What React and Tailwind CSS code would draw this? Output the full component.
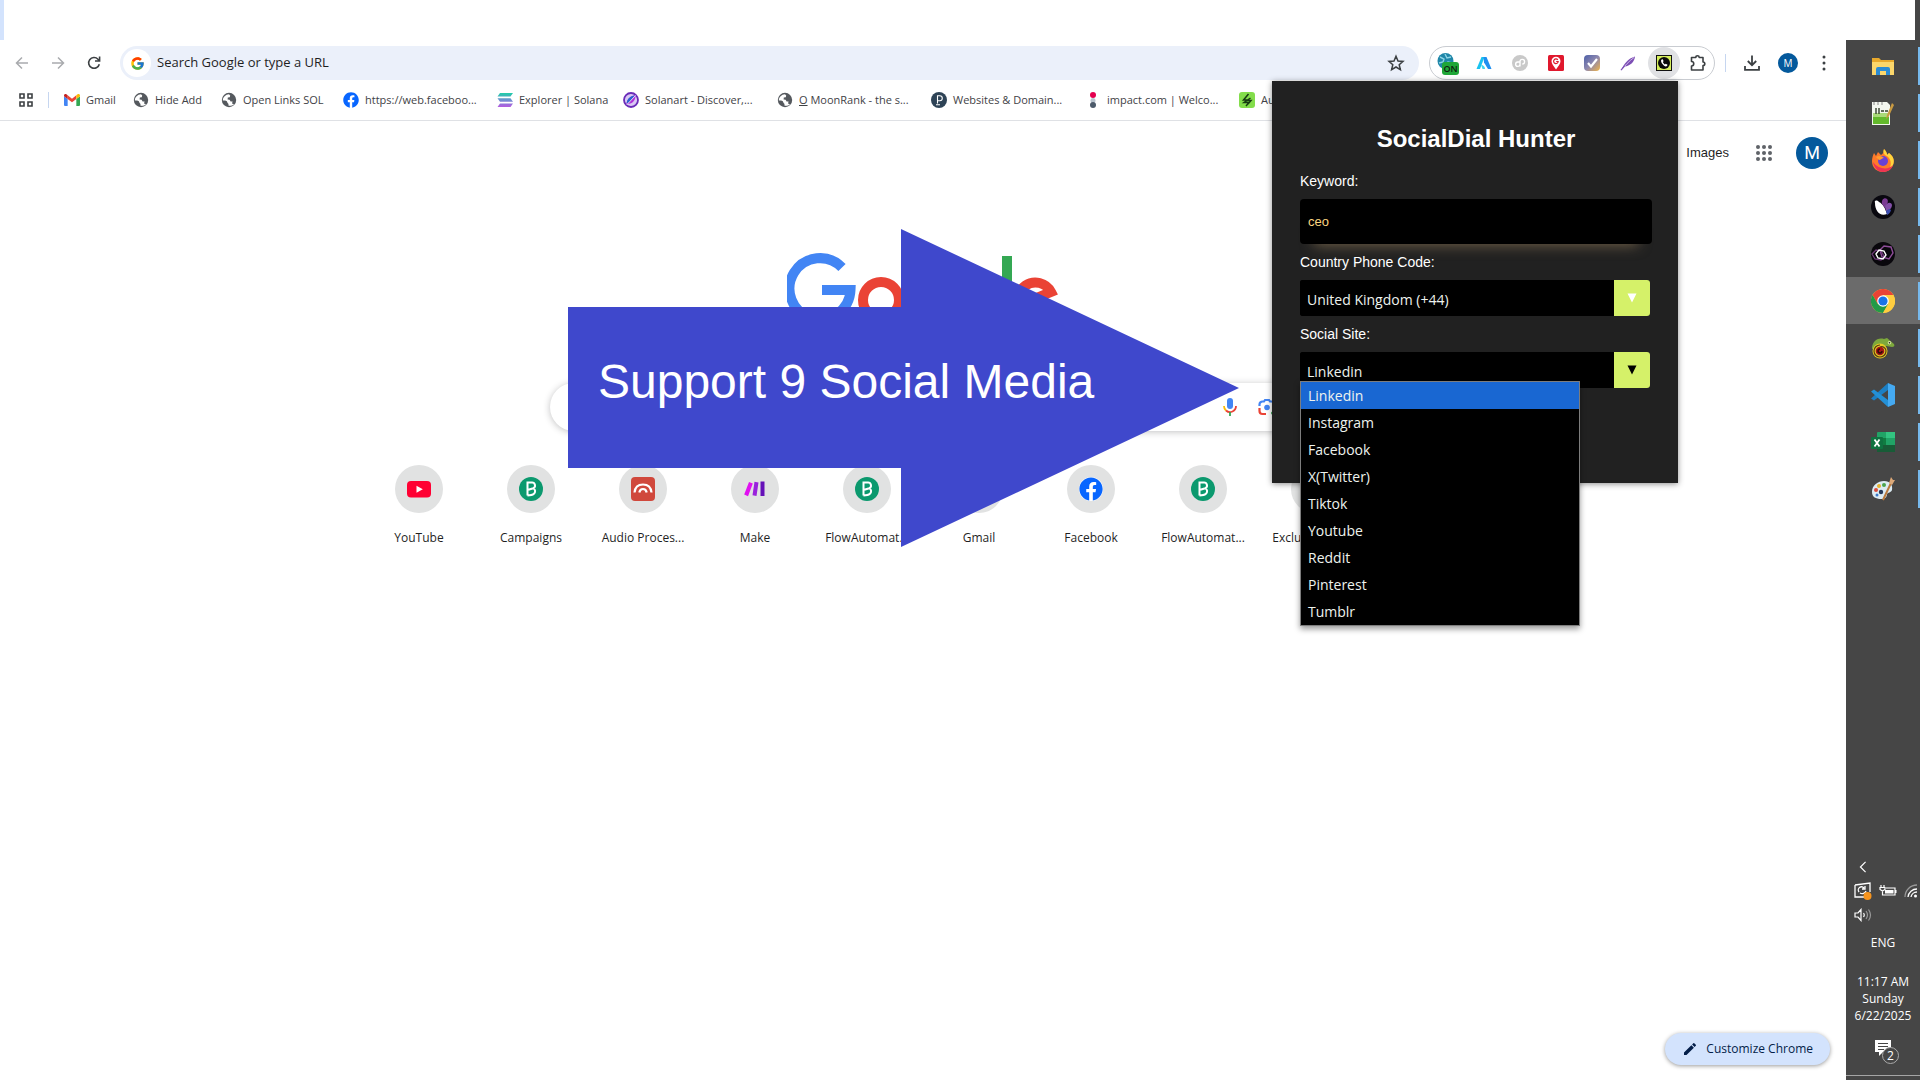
import React from "react";
import { FcGoogle } from "react-icons/fc";
import { FaFacebook } from "react-icons/fa";
import { MdEdit } from "react-icons/md";

const ui = "font-['Open_Sans','Noto_Sans',sans-serif]";
const arial = "font-['Liberation_Sans',Arial,sans-serif]";

function Globe() {
  return (
    <svg viewBox="0 0 16 16" className="size-4">
      <circle cx="8" cy="8" r="7.2" fill="#55595e" />
      <path d="M1.800 8.600C2 5 4.500 2.600 8 2.300L9.200 3.600 8.800 5.200 6.800 5.600 6.600 7.400 8.600 7.800 9.600 9.400H11.600L11 11.500 13 12.200C11.500 13.600 9.500 14 7.600 13.700L7.400 11.800 5.400 10.400 5 8.800Z" fill="#fff" />
      <path d="M2.600 8.800 5.600 9 6.600 11 6.800 13.400C4.500 13 2.800 11.200 2.600 8.800Z" fill="#55595e" />
    </svg>
  );
}

function GmailMark() {
  return (
    <svg viewBox="0 0 24 18" className="w-4">
      <path d="M0 3v13.5A1.5 1.5 0 0 0 1.500 18H5.500V7.500L0 3.400Z" fill="#4285f4" />
      <path d="M18.500 18h4a1.500 1.500 0 0 0 1.500-1.500V3.400L18.500 7.500Z" fill="#34a853" />
      <path d="M5.500 7.500V2l6.500 5 6.500-5v5.500L12 12.500Z" fill="#ea4335" />
      <path d="M0 2.200C0 0 2.500-.8 4.200.8L5.500 2v5.500L0 3.400Z" fill="#c5221f" />
      <path d="M24 2.200C24 0 21.500-.8 19.800.8L18.500 2v5.500L24 3.400Z" fill="#fbbc04" />
    </svg>
  );
}

function SolanaMark() {
  return (
    <svg viewBox="0 0 16 16" className="size-4">
      <defs>
        <linearGradient id="sol" x1="0" y1="1" x2="0" y2="0">
          <stop offset="0" stopColor="#b45be0" />
          <stop offset=".5" stopColor="#6d8fd0" />
          <stop offset="1" stopColor="#1fcfa8" />
        </linearGradient>
      </defs>
      <path d="M3 1h13l-2.500 3.500H.5ZM.5 6.300h13L16 9.800H3ZM3 11.500h13L13.500 15H.5Z" fill="url(#sol)" />
    </svg>
  );
}

function SolanartMark() {
  return (
    <svg viewBox="0 0 16 16" className="size-4">
      <circle cx="8" cy="8" r="7" fill="#d9c8f4" stroke="#6a2bb8" strokeWidth="1.800" />
      <path d="M3.500 12C4 7.500 7.500 3.500 12.500 3.300 12.700 8 9.500 12.500 3.500 12Z" fill="#b02fd8" />
      <path d="M3.500 11.500C4 7 7 4 12 3.500L6 10.500Z" fill="#2b62d0" />
      <path d="M12.500 3.500 4 12.500" stroke="#fff" strokeWidth=".8" />
    </svg>
  );
}

function PMark() {
  return (
    <svg viewBox="0 0 16 16" className="size-4">
      <circle cx="8" cy="8" r="8" fill="#2e4356" />
      <path d="M6.500 11.500V3.800H8.800a2.500 2.500 0 0 1 0 5H6.500M5 12.800h4" fill="none" stroke="#fff" strokeWidth="1.100" />
    </svg>
  );
}

function ImpactMark() {
  return (
    <svg viewBox="0 0 16 16" className="size-4">
      <circle cx="8" cy="3" r="3" fill="#e4004f" />
      <circle cx="8" cy="8.500" r="2.500" fill="#b9c4ce" />
      <circle cx="8" cy="13" r="3" fill="#4d5b6b" />
    </svg>
  );
}

function GreenMark() {
  return (
    <svg viewBox="0 0 16 16" className="size-4">
      <rect width="16" height="16" rx="3" fill="#83dd4b" />
      <path d="M9.500 2 4.500 8h4L5 10.500h5L7 14M11.500 6 8 8.500h4L9 12" fill="none" stroke="#163a12" strokeWidth="1.500" />
    </svg>
  );
}

function FacebookMark({ size = "size-4" }) {
  return (
    <span className={`${size} grid place-items-center rounded-full bg-white`}>
      <FaFacebook className="size-full text-[#0866ff]" />
    </span>
  );
}

const bookmarks = [
  { label: "Gmail", icon: <GmailMark /> },
  { label: "Hide Add", icon: <Globe /> },
  { label: "Open Links SOL", icon: <Globe /> },
  { label: "https://web.faceboo...", icon: <FacebookMark /> },
  { label: "Explorer | Solana", icon: <SolanaMark /> },
  { label: "Solanart - Discover,...", icon: <SolanartMark /> },
  { label: "MoonRank", icon: <Globe />, moon: true },
  { label: "Websites & Domain...", icon: <PMark /> },
  { label: "impact.com | Welco...", icon: <ImpactMark /> },
  { label: "Automation", icon: <GreenMark /> },
];

const bookmarkWidths = [
  "w-[69px]", "w-[88px]", "w-[122px]", "w-[154px]", "w-[126px]",
  "w-[154px]", "w-[154px]", "w-[154px]", "w-[154px]", "w-[154px]",
];

function IconButton({ label, children, width = "w-9" }) {
  return (
    <button aria-label={label} className={`grid shrink-0 place-items-center text-[#474747] ${width}`}>
      {children}
    </button>
  );
}

function Toolbar() {
  return (
    <div className="flex h-[46px] items-center pl-1 pr-1">
      <IconButton label="Back">
        <svg viewBox="0 0 16 16" className="size-4" fill="none" stroke="#a9abae" strokeWidth="1.500">
          <path d="M14 8H2.500M8 2.500 2.500 8 8 13.500" />
        </svg>
      </IconButton>
      <IconButton label="Forward">
        <svg viewBox="0 0 16 16" className="size-4" fill="none" stroke="#a9abae" strokeWidth="1.500">
          <path d="M2 8h11.500M8 2.500 13.500 8 8 13.500" />
        </svg>
      </IconButton>
      <IconButton label="Reload">
        <svg viewBox="0 0 16 16" className="size-4" fill="none" stroke="#3c4043" strokeWidth="1.600">
          <path d="M13.300 9.200A5.400 5.400 0 1 1 12 4.200L13.500 5.700M13.600 1.500V6H9" />
        </svg>
      </IconButton>
      <div className="ml-2 mr-[10px] flex h-[34px] flex-1 items-center rounded-full bg-[#ebf0fa] pl-[3px] pr-[14px]">
        <span className="grid size-7 place-items-center rounded-full bg-white">
          <FcGoogle className="size-[15px]" />
        </span>
        <input
          aria-label="Address and search bar"
          placeholder="Search Google or type a URL"
          className={`${ui} ml-[6px] flex-1 bg-transparent text-[13px] text-[#1f1f1f] outline-none placeholder:text-[#1f1f1f]`}
        />
        <button aria-label="Bookmark this tab">
          <svg viewBox="0 0 18 18" className="size-[18px]" fill="none" stroke="#3c4043" strokeWidth="1.500">
            <path d="M9 2.200 11 7l5 .4-3.800 3.300 1.200 5L9 13l-4.400 2.700 1.200-5L2 7.400 7 7Z" />
          </svg>
        </button>
      </div>
      <div className="flex h-[34px] items-center rounded-full border border-[#c9ccd1]">
        <IconButton label="Dialer extension, on">
          <svg viewBox="0 0 24 24" className="size-6">
            <circle cx="9.500" cy="10" r="8" fill="#1f86a8" />
            <path d="M4 6l4 2-1 3-4 1M9 3l2 4 4-1M8 14l4-3 4 1" fill="none" stroke="#8ed4e4" strokeWidth="1.400" />
            <rect x="6" y="11" width="17" height="13" rx="3" fill="#1fa637" />
            <text x="14.500" y="21" textAnchor="middle" fontSize="9" fontWeight="600" fontFamily="Open Sans, sans-serif" fill="#0c1c0e">ON</text>
          </svg>
        </IconButton>
        <IconButton label="Analytics extension">
          <svg viewBox="0 0 16 16" className="size-4">
            <path d="M5.500 2h3L4 14H.5Z" fill="#19c3f0" />
            <path d="M7.500 2h3l5 12H12L8 7.500Z" fill="#1f8ff0" />
            <path d="M5 9.500C7.500 10 9 12 9 14H6.500Z" fill="#3fd3ee" />
          </svg>
        </IconButton>
        <IconButton label="Pages extension">
          <svg viewBox="0 0 16 16" className="size-4">
            <circle cx="8" cy="8" r="8" fill="#c9c9c9" />
            <path d="M8 11.500V6.500A2.300 2.300 0 1 1 10.300 9M8 7H5.700A2.200 2.200 0 1 0 8 9.500" fill="none" stroke="#fff" strokeWidth="1.400" />
          </svg>
        </IconButton>
        <IconButton label="Maps extension">
          <svg viewBox="0 0 16 16" className="size-4">
            <rect width="16" height="16" rx="1.500" fill="#e0182d" />
            <path d="M8 14.500C6 11.500 3.500 9 3.500 6.300a4.500 4.500 0 0 1 9 0C12.500 9 10 11.500 8 14.500Z" fill="#fff" />
            <path d="M9.800 4.900A2.300 2.300 0 1 0 10.200 6.500H8.200" fill="none" stroke="#e0182d" strokeWidth="1.200" />
          </svg>
        </IconButton>
        <IconButton label="Checker extension">
          <svg viewBox="0 0 16 16" className="size-4">
            <defs>
              <linearGradient id="chk" x1="0" y1="0" x2="1" y2="1">
                <stop offset="0" stopColor="#4c5fa8" />
                <stop offset=".5" stopColor="#8d87ae" />
                <stop offset="1" stopColor="#f2b547" />
              </linearGradient>
            </defs>
            <rect width="16" height="16" rx="4" fill="url(#chk)" />
            <path d="m4 8 3 3.500 6-7.500" fill="none" stroke="#fff" strokeWidth="2.200" />
          </svg>
        </IconButton>
        <IconButton label="Writer extension">
          <svg viewBox="0 0 16 16" className="size-4">
            <path d="M1.500 14.500C4 9 8 3.500 15 1.500 14.500 7 10 11 4.500 11.500Z" fill="#7d4fb5" />
            <path d="M1 15.200C5 11 9 6 14 2.500" stroke="#ddccf0" strokeWidth=".8" fill="none" />
            <path d="M1 15.200 4.500 11" stroke="#7d4fb5" strokeWidth="1.200" />
          </svg>
        </IconButton>
        <IconButton label="SocialDial Hunter extension">
          <span className="grid size-8 place-items-center rounded-full bg-[#e0e1e4]">
            <svg viewBox="0 0 16 16" className="size-4">
              <rect width="16" height="16" fill="#111" />
              <rect x="1" y="1" width="14" height="14" fill="#d5ee5c" />
              <circle cx="8" cy="8" r="6" fill="#0a0a0a" />
              <path d="M5.600 4.500 6.800 4.200 7.600 6.200 6.800 7Q7.400 8.500 8.800 9.400L9.800 8.700 11.500 9.800 11 11Q9.800 12.200 7.800 10.500 5 8 5 6 5 5 5.600 4.500Z" fill="#fff" />
            </svg>
          </span>
        </IconButton>
        <IconButton label="Extensions" width="w-8">
          <svg viewBox="0 0 18 18" className="size-[18px]" fill="none" stroke="#3c4043" strokeWidth="1.600">
            <path d="M2.500 3.500H6.800A1.700 1.700 0 0 1 10.200 3.500H14V8A1.800 1.800 0 0 1 14 11.600V16H2.500V12A2.200 2.200 0 0 0 2.500 7.500Z" strokeLinejoin="round" />
          </svg>
        </IconButton>
      </div>
      <span className="ml-[10px] mr-2 h-[18px] w-px bg-[#c6d6f0]" />
      <IconButton label="Downloads">
        <svg viewBox="0 0 18 18" className="size-[18px]" fill="none" stroke="#3c4043" strokeWidth="1.800">
          <path d="M9 1.500V11M4.800 7 9 11.200 13.200 7M2 12v3.800h14V12" />
        </svg>
      </IconButton>
      <IconButton label="Profile">
        <span className={`${ui} grid size-5 place-items-center rounded-full bg-[#04599c] text-[10px] text-white`}>M</span>
      </IconButton>
      <IconButton label="Chrome menu">
        <svg viewBox="0 0 4 16" className="h-4 w-1" fill="#3c4043">
          <circle cx="2" cy="2" r="1.500" />
          <circle cx="2" cy="8" r="1.500" />
          <circle cx="2" cy="14" r="1.500" />
        </svg>
      </IconButton>
    </div>
  );
}

function Bookmarks() {
  return (
    <nav className="flex h-[35px] items-center overflow-hidden border-b border-[#dfe1e5] pb-[6px] pl-[18px]">
      <button aria-label="Tab groups">
        <svg viewBox="0 0 16 16" className="size-4" fill="none" stroke="#3c4043" strokeWidth="1.600">
          <path d="M2 2h4v4H2ZM10 2h4v4h-4ZM2 10h4v4H2ZM10 10h4v4h-4Z" />
        </svg>
      </button>
      <span className="ml-[14px] mr-[15px] h-4 w-px bg-[#c6d6f0]" />
      {bookmarks.map((b, i) => (
        <a key={b.label} href="#" className={`${ui} ${bookmarkWidths[i]} flex shrink-0 items-center gap-[6px] text-[11px] whitespace-nowrap text-[#3f4246]`}>
          {b.icon}
          {b.moon ? <span><u>O</u> MoonRank - the s...</span> : <span>{b.label}</span>}
        </a>
      ))}
    </nav>
  );
}

function GoogleLogo() {
  return (
    <svg viewBox="0 0 272 92" className="h-[92px] w-[272px]" fill="none" strokeWidth="10" role="img" aria-label="Google">
      <path d="M55 14.500A30.500 30.500 0 1 0 63.500 37H35" stroke="#4285f4" />
      <circle cx="94" cy="47" r="18" stroke="#ea4335" />
      <circle cx="141" cy="47" r="18" stroke="#fbbc05" />
      <path d="M205 25V65A18 18 0 0 1 172 74" stroke="#4285f4" />
      <circle cx="187" cy="47" r="18" stroke="#4285f4" />
      <path d="M220 3V69" stroke="#34a853" />
      <path d="M230 53 264 39A17.500 17.500 0 1 0 262 58" stroke="#ea4335" />
    </svg>
  );
}

function BrevoMark() {
  return (
    <svg viewBox="0 0 24 24" className="size-6">
      <circle cx="12" cy="12" r="12" fill="#0b996e" />
      <path d="M8.500 18.500V5.500h4.300a3 3 0 0 1 1.500 5.700L8.500 13M14 11.200c2.600 1.200 2.800 4 .7 5.900-1.500 1.300-4 1.400-6.200 1.400" fill="none" stroke="#fff" strokeWidth="2" />
    </svg>
  );
}

function YoutubeMark() {
  return (
    <svg viewBox="0 0 24 24" className="size-6">
      <rect y="4" width="24" height="16.500" rx="4" fill="#ff0033" />
      <path d="m9.500 8.800 6.300 3.500-6.300 3.500Z" fill="#fff" />
    </svg>
  );
}

function AudioMark() {
  return (
    <svg viewBox="0 0 24 24" className="size-6">
      <rect width="24" height="24" rx="4" fill="#d0483c" />
      <path d="M3.500 15.500C4 10 7.500 7.500 12 7.500S20 10 20.500 15.500M8.300 15.500C8.800 13 10 12 12 12S15.200 13 15.700 15.500" fill="none" stroke="#fff" strokeWidth="2.200" />
    </svg>
  );
}

function MakeMark() {
  return (
    <svg viewBox="0 0 24 24" className="size-6">
      <path d="M6 5 9.800 6.500 5 19.200 1.200 17.500Z" fill="#e010f0" />
      <path d="M11.500 4.800 15.500 5.500 13.500 19 9.500 18.200Z" fill="#9a22dc" />
      <path d="M17.500 4.500H21.500V19H17.500Z" fill="#6510b8" />
    </svg>
  );
}

const shortcuts = [
  { label: "YouTube", icon: <YoutubeMark /> },
  { label: "Campaigns", icon: <BrevoMark /> },
  { label: "Audio Proces...", icon: <AudioMark /> },
  { label: "Make", icon: <MakeMark /> },
  { label: "FlowAutomat...", icon: <BrevoMark /> },
  { label: "Gmail", icon: <GmailMark /> },
  { label: "Facebook", icon: <FacebookMark size="size-6" /> },
  { label: "FlowAutomat...", icon: <BrevoMark /> },
  { label: "Exclusive Dea...", icon: <BrevoMark /> },
  { label: "Add shortcut", icon: <span className="text-xl">+</span> },
];

function NewTab() {
  return (
    <section className="flex flex-1 flex-col items-center bg-white">
      <div className={`${arial} flex h-16 w-full items-center justify-end pr-[18px] text-[13px] text-[#1f1f1f]`}>
        <a href="#">Images</a>
        <button aria-label="Google apps" className="ml-[27px] mr-6">
          <svg viewBox="0 0 16 16" className="size-4" fill="#5f6368">
            {[2, 8, 14].map((y) => [2, 8, 14].map((x) => <circle key={`${x}-${y}`} cx={x} cy={y} r="2" />))}
          </svg>
        </button>
        <button aria-label="Google account" className="grid size-8 place-items-center rounded-full bg-[#04599c] font-['Roboto',sans-serif] text-lg text-white">M</button>
      </div>
      <div className="mt-[68px]">
        <GoogleLogo />
      </div>
      <div className="mt-[38px] flex h-12 w-full max-w-[746px] items-center rounded-full bg-white pr-5 pl-5 shadow-[0_1px_7px_rgba(32,33,36,0.28)]">
        <input aria-label="Search Google" className={`${arial} flex-1 bg-transparent outline-none`} />
        <button aria-label="Search by voice" className="mr-5">
          <svg viewBox="0 0 16 20" className="h-5 w-4" fill="none">
            <rect x="5" y="1" width="6" height="11" rx="3" fill="#4285f4" />
            <path d="M2 9a6 6 0 0 0 2 4.500" stroke="#fbbc05" strokeWidth="1.800" />
            <path d="M4 13.500A6 6 0 0 0 14 9" stroke="#ea4335" strokeWidth="1.800" />
            <path d="M8 15v4" stroke="#34a853" strokeWidth="1.800" />
          </svg>
        </button>
        <button aria-label="Search by image">
          <svg viewBox="0 0 18 18" className="size-[18px]" fill="none" strokeWidth="2.200">
            <path d="M1.500 8V6.500a3 3 0 0 1 3-3H6L7 2h4l1 1.500h1.500a3 3 0 0 1 3 3V8" stroke="#4285f4" />
            <path d="M1.500 10v3a3 3 0 0 0 3 3H8" stroke="#ea4335" />
            <circle cx="9" cy="9.500" r="2.800" fill="#4285f4" />
            <circle cx="14.500" cy="15" r="1.500" fill="#34a853" />
          </svg>
        </button>
      </div>
      <div className="mt-[34px] flex">
        {shortcuts.map((s, i) => (
          <a key={i} href="#" className="flex w-28 flex-col items-center">
            <span className="grid size-12 place-items-center rounded-full bg-[#e1e2e2]">{s.icon}</span>
            <span className={`${ui} mt-[15px] text-xs leading-5 text-[#1f1f1f]`}>{s.label}</span>
          </a>
        ))}
      </div>
      <div className="mt-auto mr-4 mb-[15px] self-end">
        <button className={`${ui} flex h-8 items-center rounded-full bg-[#d3e3fd] px-[17px] text-xs text-[#041e49] shadow-[0_1px_4px_rgba(0,0,0,0.4)]`}>
          <MdEdit className="mr-2 size-4" />
          Customize Chrome
        </button>
      </div>
    </section>
  );
}

const sites = ["Linkedin", "Instagram", "Facebook", "X(Twitter)", "Tiktok", "Youtube", "Reddit", "Pinterest", "Tumblr"];

function SelectBox({ id, options, arrowColor }) {
  return (
    <div className="mr-[2px] flex h-9 overflow-hidden rounded-[3px] bg-black">
      <select id={id} className={`${ui} flex-1 appearance-none bg-black pt-[3px] pl-[7px] text-sm text-[#eef3ee] outline-none`}>
        {options.map((o) => <option key={o}>{o}</option>)}
      </select>
      <span className={`grid w-9 place-items-center bg-[#d5f169] ${arrowColor}`}>
        <svg viewBox="0 0 10 10" className="size-[10px]" fill="currentColor"><path d="M.5.5h9L5 9.500Z" /></svg>
      </span>
    </div>
  );
}

function Popup() {
  return (
    <aside className={`${arial} absolute top-[81px] right-[242px] z-20 h-[402px] w-[406px] bg-[#212121] pt-[42px] pr-[26px] pl-7 text-sm text-white shadow-[0_1px_6px_rgba(0,0,0,0.45)]`}>
      <h1 className="text-center text-2xl leading-8 font-bold">SocialDial Hunter</h1>
      <label htmlFor="keyword" className="mt-4 mb-2 block leading-5">Keyword:</label>
      <input id="keyword" defaultValue="ceo" className="block h-[45px] w-full rounded bg-black px-2 text-[13px] text-[#fbd580] shadow-[0_15px_14px_-14px_rgba(150,125,90,0.7)] outline-none" />
      <label htmlFor="country" className="mt-2 mb-2 block leading-5">Country Phone Code:</label>
      <SelectBox id="country" options={["United Kingdom (+44)"]} arrowColor="text-white" />
      <label htmlFor="site" className="mt-2 mb-2 block leading-5">Social Site:</label>
      <div className="relative">
        <SelectBox id="site" options={sites} arrowColor="text-black" />
        <ul role="listbox" aria-label="Social Site" className={`${ui} absolute top-[29px] left-0 w-[280px] border border-[#7d7d7d] bg-black shadow-[0_3px_6px_rgba(0,0,0,0.4)]`}>
          {sites.map((s, i) => (
            <li key={s} role="option" aria-selected={i === 0} className={`h-[27px] pl-[7px] leading-[27px] text-[#eef3ee] ${i === 0 ? "bg-[#1967d2]" : ""}`}>{s}</li>
          ))}
        </ul>
      </div>
    </aside>
  );
}

function Arrow() {
  return (
    <div className="absolute top-[229px] left-[568px] z-10 flex h-[318px] w-[672px] items-center">
      <svg viewBox="0 0 672 318" className="absolute inset-0 size-full" fill="#3f48cc">
        <path d="M0 78H333V0L671 159 333 318V239H0Z" />
      </svg>
      <p className={`${arial} relative pb-3 pl-[30px] text-5xl leading-none whitespace-nowrap text-white`}>Support 9 Social Media</p>
    </div>
  );
}

const apps = [
  {
    label: "File Explorer",
    art: (
      <>
        <path d="M1 4h7l2 2h13v15H1Z" fill="#e8a92c" />
        <path d="M1 8h22v13H1Z" fill="#fbd66b" />
        <path d="M5 21v-6a2 2 0 0 1 2-2h10a2 2 0 0 1 2 2v6h-4v-4H9v4Z" fill="#2b8bd3" />
      </>
    ),
  },
  {
    label: "Notepad++",
    art: (
      <>
        <path d="M1 1h15l3 3v20H1Z" fill="#f3f6ef" />
        <path d="M2 15h16v8H2Z" fill="#63b92c" />
        <path d="M2 12h16v4H2Z" fill="#a9da78" />
        <path d="M5 7v6M8 7v6M10 10h3M14 10h3" stroke="#33402c" strokeWidth="1.400" />
        <path d="M3 1v3M7 1v3M11 1v3" stroke="#888" />
        <path d="M21 2 16 14l-1 4 3-3 5-11Z" fill="#c89a42" />
      </>
    ),
  },
  {
    label: "Firefox",
    art: (
      <>
        <path d="M13 1c2 2 3 4 3 6l2-2c4 3 6 7 4 12-2 5-6 7-10 7C6 24 1 20 1 13c0-3 1-6 2-8l2 3 2-4 3 3c2-1 3-3 3-6Z" fill="#ff7a2a" />
        <path d="M13 1c2 2 3 4 3 6l2-2c4 3 6 7 4 12-1 2-2 3-3 3 2-6 0-11-5-13-2-2-2-4-1-6Z" fill="#ffd53d" />
        <path d="M2 14c1 6 5 10 10 10 5 0 9-3 10-7-4 5-14 5-20-3Z" fill="#ee3355" />
        <circle cx="12" cy="13" r="5" fill="#6a40d5" />
        <path d="M5 9c3-2 6-1 8 1-2 0-3 2-5 2Z" fill="#ff9e2e" />
      </>
    ),
  },
  {
    label: "Butterfly app",
    art: (
      <>
        <circle cx="12" cy="12" r="12" fill="#09080f" />
        <path d="M4 8C3 5 6 5 8 7c4 2 6 6 8 12C9 22 4 16 4 8Z" fill="#fff" />
        <path d="M11 9c-1-5 3-7 5-5 2 2 0 6-2 9Z" fill="#7b3b92" />
        <path d="M14 12c1-4 6-6 7-2 0 3-3 6-6 6Z" fill="#8450a8" />
        <path d="M15 16c2-2 4-2 5-1-1 3-2 4-4 5Z" fill="#3c4db0" />
      </>
    ),
  },
  {
    label: "Hexagon app",
    art: (
      <>
        <circle cx="12" cy="12" r="12" fill="#09070c" />
        <path d="m9 8 4-4 7 1 2 6-4 6-7-2Z" fill="none" stroke="#8d4c97" strokeWidth="1.400" />
        <path d="m1 12 4-4 5 1 3 5-3 4-6-1Z" fill="none" stroke="#6d3977" strokeWidth="1.300" />
        <path d="m5 12 3-4 5 1 2 4-3 4-5-1Z" fill="none" stroke="#fff" strokeWidth="1.400" />
      </>
    ),
  },
  {
    label: "Google Chrome",
    active: true,
    art: (
      <>
        <circle cx="12" cy="12" r="12" fill="#ffcd40" />
        <path d="M1.600 6A12 12 0 0 1 22.400 6L12 6.500 6.800 15Z" fill="#ea4335" />
        <path d="M1.600 6A12 12 0 0 0 12 24L17.200 15 6.800 15Z" fill="#229a48" />
        <path d="M22.400 6H12V9l5.200 6L12 24A12 12 0 0 0 22.400 6Z" fill="#ffcd40" />
        <circle cx="12" cy="12" r="5.800" fill="#fff" />
        <circle cx="12" cy="12" r="4.600" fill="#1a73e8" />
      </>
    ),
  },
  {
    label: "Chameleon app",
    art: (
      <>
        <path d="M1 13C1 6 6 1 13 3l3-1 7 6c1 2 0 3-2 3l-6-1-8 1Z" fill="#7da83c" />
        <circle cx="9" cy="15" r="7.500" fill="#e4cc24" />
        <path d="M9 9a6 6 0 1 0 6 6c0-3-3-5-6-4" fill="none" stroke="#5b3c12" strokeWidth="1.200" />
        <circle cx="9" cy="15" r="4.300" fill="#a41616" />
        <path d="M9 13a2 2 0 1 0 2 2" fill="none" stroke="#2a0a0a" strokeWidth="1.400" />
        <circle cx="18.500" cy="6.800" r="1.800" fill="#d9e7a0" />
        <circle cx="18.500" cy="6.800" r=".8" fill="#222" />
      </>
    ),
  },
  {
    label: "Visual Studio Code",
    art: (
      <>
        <path d="M17 0v7L3 17.500 0 15.500Z" fill="#1c7fc4" />
        <path d="M0 8.500 3 6.500 17 17v7Z" fill="#2490d6" />
        <path d="m17 0 7 3v18l-7 3Z" fill="#45aaf2" />
      </>
    ),
  },
  {
    label: "Excel",
    art: (
      <>
        <rect x="6" y="2" width="18" height="20" rx="1" fill="#21a366" />
        <path d="M15 2h9v6h-9Z" fill="#33c481" />
        <path d="M6 8h9v7H6Z" fill="#107c41" />
        <path d="M6 15h18v7H6Z" fill="#185c37" />
        <rect y="7" width="12" height="12" rx="1" fill="#0f7240" />
        <path d="m3.500 9.500 5 7M8.500 9.500l-5 7" stroke="#fff" strokeWidth="1.800" />
      </>
    ),
  },
  {
    label: "Paint",
    art: (
      <>
        <path d="M1 15C1 8 7 4 13 4c6 0 9 4 8 9-1 3-4 2-5 4 0 3-2 5-6 5-5 0-9-2-9-7Z" fill="#dcebf3" />
        <circle cx="5" cy="13" r="2" fill="#d94b3a" />
        <circle cx="8" cy="9" r="2" fill="#e4b22f" />
        <circle cx="13" cy="8" r="2" fill="#4aa34e" />
        <circle cx="10" cy="15" r="2.200" fill="#253858" />
        <circle cx="6" cy="18" r="1.500" fill="#3a79c8" />
        <path d="m12 23 8-17" stroke="#b9793d" strokeWidth="2" />
        <path d="m18 6 2-6 2 3 2 0-3 5Z" fill="#dca878" />
      </>
    ),
  },
];

function Taskbar() {
  return (
    <aside className={`${ui} flex w-[74px] shrink-0 flex-col bg-[#464646] text-xs text-white`}>
      <nav className="flex flex-col pt-[2px]">
        {apps.map((a) => (
          <button key={a.label} aria-label={a.label} className={`flex h-[47px] items-center justify-end gap-[23px] ${a.active ? "bg-[#6b6b6b]" : ""}`}>
            <svg viewBox="0 0 24 24" className="size-6">{a.art}</svg>
            <span className="h-[38px] w-[2px] bg-[#76b9ed]" />
          </button>
        ))}
      </nav>
      <div className="mt-auto flex flex-col">
        <button aria-label="Show hidden icons" className="ml-[11px] grid h-6 w-3 place-items-center">
          <svg viewBox="0 0 8 14" className="h-3 w-2" fill="none" stroke="#fff" strokeWidth="1.400"><path d="M7 1 1 7l6 6" /></svg>
        </button>
        <div className="flex h-6 items-center gap-[7px] overflow-hidden pl-2">
          <svg viewBox="0 0 18 18" className="size-[18px] shrink-0" fill="none" stroke="#fff" strokeWidth="1.300">
            <path d="M1 3 16 1v9M1 3v12h9M5 10a3 3 0 0 1 5-4M11 4v3H8M12 9a4 4 0 0 1-6 2" />
            <circle cx="13.500" cy="14" r="4" fill="#f7941d" stroke="none" />
          </svg>
          <svg viewBox="0 0 18 12" className="h-3 w-[18px] shrink-0" fill="none" stroke="#fff" strokeWidth="1.200">
            <path d="M2 0v2M5 0v2M1 2.500h5v2L3.500 6 1 4.500ZM3.500 6v4H5M7 3h9v7H5" />
            <path d="M6 5h8.500v3.500H6ZM16 5h1.500v3H16Z" fill="#fff" stroke="none" />
          </svg>
          <svg viewBox="0 0 14 14" className="size-[14px] shrink-0" fill="none" strokeWidth="1.300">
            <path d="M1 13A12 12 0 0 1 13 1" stroke="#999" />
            <path d="M4 13A9 9 0 0 1 13 5M7 13a6 6 0 0 1 6-5" stroke="#fff" />
            <circle cx="11.500" cy="12" r="1.500" fill="#fff" />
          </svg>
        </div>
        <button aria-label="Volume" className="ml-2 flex h-6 items-center">
          <svg viewBox="0 0 18 14" className="h-[14px] w-[18px]" fill="none" stroke="#fff" strokeWidth="1.200">
            <path d="M1 5h3l3-3.500v11L4 9H1ZM9.500 5q1.500 2 0 4" />
            <path d="M12 3q3 4 0 8M14.500 1.500q4 5.500 0 11" stroke="#999" />
          </svg>
        </button>
        <button className="mt-[6px] h-5 text-center">ENG</button>
        <time className="mt-5 flex flex-col items-center text-xs leading-[17px]">
          <span>11:17 AM</span>
          <span>Sunday</span>
          <span>6/22/2025</span>
        </time>
        <button aria-label="Notifications, 2 new" className="mt-[9px] grid h-[38px] place-items-center">
          <svg viewBox="0 0 26 26" className="ml-2 size-[26px]">
            <path d="M1 1h16v12H9l-4 4v-4H1Z" fill="#fff" />
            <path d="M4 4.500h10M4 7.500h10M4 10.500h6" stroke="#464646" strokeWidth="1.200" />
            <circle cx="16.500" cy="16.500" r="8" fill="#464646" stroke="#aaa" />
            <text x="16.500" y="21" textAnchor="middle" fontSize="12" fontFamily="Open Sans, sans-serif" fill="#fff">2</text>
          </svg>
        </button>
        <div className="mt-1 h-[5px] border-t border-[#a5a5a5]" />
      </div>
    </aside>
  );
}

export default function App() {
  return (
    <div className="relative flex min-h-screen flex-col overflow-hidden bg-white">
      <div className="flex h-10">
        <span className="w-1 bg-[#d3e3fd]" />
        <span className="flex-1 bg-white" />
        <span className="w-[5px] bg-[#464646]" />
      </div>
      <div className="flex flex-1">
        <main className="flex min-w-0 flex-1 flex-col">
          <Toolbar />
          <Bookmarks />
          <NewTab />
        </main>
        <Taskbar />
      </div>
      <Arrow />
      <Popup />
    </div>
  );
}
